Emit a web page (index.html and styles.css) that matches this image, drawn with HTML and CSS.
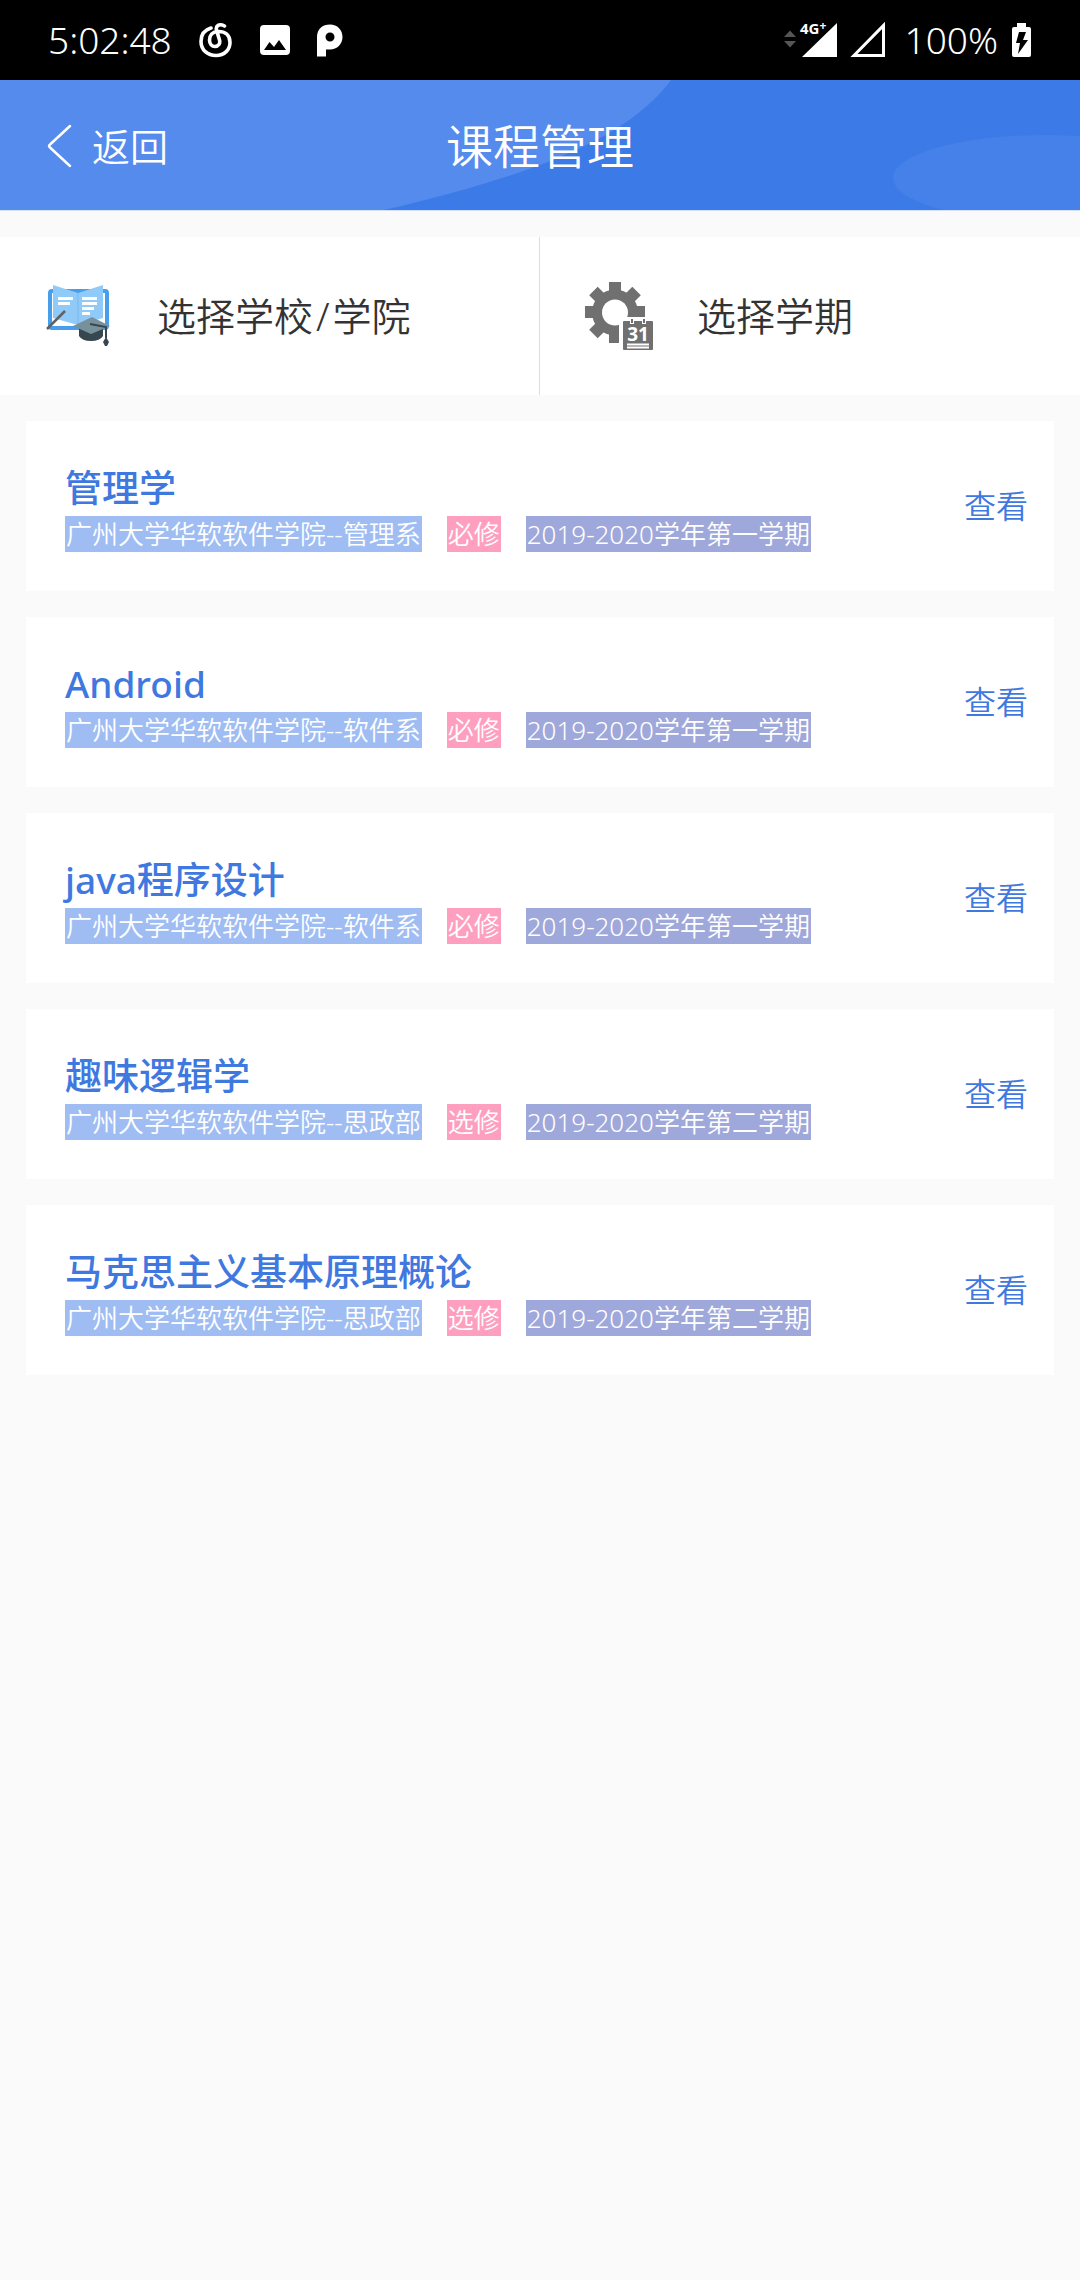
FILE: index.html
```html
<!DOCTYPE html>
<html lang="zh-CN">
<head>
<meta charset="utf-8">
<meta name="viewport" content="width=device-width, initial-scale=1">
<title>课程管理</title>
<link rel="stylesheet" href="styles.css">
</head>
<body>
<div class="status-bar">
  <div class="status-group">
    <span class="status-text">5:02:48</span>
    <svg width="34" height="36" viewBox="0 0 34 36" fill="none" stroke="#fff" stroke-width="3.6" stroke-linecap="round"><path d="M12 6C5 8 2 13 2 19.500C2 28 8.500 33.500 17 33.500C25.500 33.500 31 27.500 31 20.500C31 13 26 9.500 19.500 9.500C13 9.500 10.500 14 10.500 18C10.500 22 13 24.500 16 24.500C19.500 24.500 21.500 21.500 20.500 18L17.500 8C16.500 4 20 1 25.500 4"/></svg>
    <svg width="30" height="36" viewBox="0 0 30 36"><path fill="#fff" fill-rule="evenodd" d="M4 3H26Q30 3 30 7V29Q30 33 26 33H4Q0 33 0 29V7Q0 3 4 3ZM4 28H26L19 18L14 25L9.500 20Z"/></svg>
    <svg width="26" height="36" viewBox="0 0 26 36"><path fill="#fff" fill-rule="evenodd" d="M0 34.500V15C0 7 5.500 2.500 13 2.500C20.500 2.500 25.500 8 25.500 15C25.500 22 20 27.500 13 27.500H9V34.500ZM13 10.500A4.500 4.500 0 1 0 13 19.500A4.500 4.500 0 1 0 13 10.500Z"/></svg>
  </div>
  <div class="status-group status-group-right">
    <svg width="54" height="60" viewBox="0 -10 54 60"><path fill="#555" d="M0 17H12L6 10.500ZM0 21H12L6 27.500Z"/><path fill="#fff" d="M18 37H53V3Z"/><text class="network-label" x="16" y="14">4G<tspan class="network-plus" dy="-4">+</tspan></text></svg>
    <svg width="36" height="40" viewBox="0 0 36 40"><path fill="none" stroke="#fff" stroke-width="3" d="M4 35.500H33.500V5.500Z"/></svg>
    <span class="status-text status-percent">100%</span>
    <svg width="20" height="40" viewBox="0 0 20 40"><path fill="#fff" d="M5 3H14V7H17Q19 7 19 9V35Q19 37 17 37H2Q0 37 0 35V9Q0 7 2 7H5Z"/><path fill="#000" d="M7 12H14L11 20H16L6 34L8 23H4Z"/></svg>
  </div>
</div>

<header class="app-header">
  <svg class="header-art" viewBox="0 0 1080 130" preserveAspectRatio="none"><path fill="#548bed" d="M0 0H671C636 47 566 88 384 130H0Z"/><ellipse cx="1045" cy="98" rx="152" ry="43" fill="#4680e9"/></svg>
  <button class="back-button" type="button">
    <svg width="26" height="44" viewBox="0 0 26 44" fill="none" stroke="#fff" stroke-width="2.500" stroke-linecap="round" stroke-linejoin="round"><path d="M23 2L3 20.500Q1 22 3 23.500L23 42"/></svg>
    <span>返回</span>
  </button>
  <h1 class="header-title">课程管理</h1>
</header>

<main class="content">
  <div class="filters">
    <button class="filter" type="button">
      <svg class="filter-icon" width="70" height="70" viewBox="0 4 70 70">
        <rect x="4" y="14" width="57" height="37" rx="2" fill="#fff" stroke="#479eea" stroke-width="4"/>
        <path fill="#90caf9" d="M7 8L32 16L57 8V41L32 48L7 41Z"/>
        <path stroke="#79b9ed" d="M32 16V48"/>
        <path stroke="#fff" stroke-width="3" d="M12 21.500H27M12 26.500H24M36 21.500H51M36 26.500H51M36 31.500H48M36 36.500H44"/>
        <path stroke="#616161" stroke-width="2.500" d="M1 52L19 34"/>
        <path fill="#37474f" d="M33 47L45 53L57 47V59Q54 64 45 64Q36 64 33 59Z"/>
        <path fill="#78909c" d="M27 49L46 40L64 49L45 57Z"/>
        <path fill="none" stroke="#37474f" stroke-width="2" d="M44 47L60 50V61"/>
        <path fill="#37474f" d="M60 60L63 65L61 69H59L57 65Z"/>
      </svg>
      <span>选择学校<span class="slash">/</span>学院</span>
    </button>
    <button class="filter" type="button">
      <svg class="filter-icon" width="70" height="70" viewBox="2 4 70 70">
        <g fill="#707070"><path d="M25 5H37V66H25ZM1 29H61V41H1Z"/><path d="M25 5H37V66H25Z" transform="rotate(45 31 35.500)"/><path d="M25 5H37V66H25Z" transform="rotate(-45 31 35.500)"/><circle cx="31" cy="35.500" r="23"/></g>
        <circle cx="31" cy="35.500" r="13" fill="#fff"/>
        <path fill="#fff" d="M35 40H70V70H35Z"/>
        <rect x="39" y="44" width="30" height="29" rx="1" fill="#707070"/>
        <path stroke="#fff" stroke-width="4" d="M48 42V47M60 42V47"/>
        <path stroke="#707070" stroke-width="2" d="M48 42V46M60 42V46"/>
        <text class="calendar-day" x="54" y="64">31</text>
        <path stroke="#fff" stroke-width="2" d="M43 67.500H65M43 70.500H65"/>
      </svg>
      <span>选择学期</span>
    </button>
  </div>

  <ul class="course-list">
    <li class="course">
      <div class="course-info"><h2 class="course-name">管理学</h2>
        <div class="tags"><span class="tag tag-school">广州大学华软软件学院--管理系</span><span class="tag tag-type">必修</span><span class="tag tag-term">2019-2020学年第一学期</span></div></div>
      <a class="view-link" href="#">查看</a>
    </li>
    <li class="course">
      <div class="course-info"><h2 class="course-name">Android</h2>
        <div class="tags"><span class="tag tag-school">广州大学华软软件学院--软件系</span><span class="tag tag-type">必修</span><span class="tag tag-term">2019-2020学年第一学期</span></div></div>
      <a class="view-link" href="#">查看</a>
    </li>
    <li class="course">
      <div class="course-info"><h2 class="course-name">java程序设计</h2>
        <div class="tags"><span class="tag tag-school">广州大学华软软件学院--软件系</span><span class="tag tag-type">必修</span><span class="tag tag-term">2019-2020学年第一学期</span></div></div>
      <a class="view-link" href="#">查看</a>
    </li>
    <li class="course">
      <div class="course-info"><h2 class="course-name">趣味逻辑学</h2>
        <div class="tags"><span class="tag tag-school">广州大学华软软件学院--思政部</span><span class="tag tag-type">选修</span><span class="tag tag-term">2019-2020学年第二学期</span></div></div>
      <a class="view-link" href="#">查看</a>
    </li>
    <li class="course">
      <div class="course-info"><h2 class="course-name">马克思主义基本原理概论</h2>
        <div class="tags"><span class="tag tag-school">广州大学华软软件学院--思政部</span><span class="tag tag-type">选修</span><span class="tag tag-term">2019-2020学年第二学期</span></div></div>
      <a class="view-link" href="#">查看</a>
    </li>
  </ul>
</main>
</body>
</html>
```
FILE: styles.css
```css
* { box-sizing: border-box; }

body {
  margin: 0;
  background: #fafafa;
  color: #333;
  font-family: "Noto Sans", "Noto Sans CJK SC", sans-serif;
  font-weight: 350;
}

button {
  margin: 0;
  padding: 0;
  border: 0;
  background: none;
  color: inherit;
  font: inherit;
}

svg { display: block; flex: none; }

.status-bar {
  display: flex;
  align-items: center;
  justify-content: space-between;
  height: 80px;
  padding: 0 48px;
  background: #000;
  color: #fff;
}

.status-group { display: flex; align-items: center; gap: 27px; }
.status-group-right { gap: 12px; }
.status-text { font-size: 37px; line-height: 40px; }
.status-percent { margin: 0 2px 0 7px; }

.network-label {
  fill: #fff;
  font-size: 15px;
  font-weight: 700;
}

.network-plus { font-size: 12px; }

.app-header {
  position: relative;
  display: grid;
  grid-template-columns: 1fr auto 1fr;
  align-items: center;
  height: 131px;
  padding: 2px 47px 0;
  border-bottom: 1px solid #d5e1f6;
  background: #3c7ae7;
  color: #fff;
}

.header-art {
  position: absolute;
  inset: 0;
  width: 100%;
  height: 100%;
}

.back-button {
  position: relative;
  display: flex;
  align-items: center;
  justify-self: start;
  gap: 19px;
  font-size: 38px;
  line-height: 56px;
}

.header-title {
  position: relative;
  margin: 0;
  font-size: 47px;
  font-weight: 350;
  line-height: 64px;
}

.content { padding-top: 26px; }

.filters {
  display: grid;
  grid-template-columns: 1fr 1fr;
  background: #fff;
}

.filter {
  display: flex;
  align-items: center;
  gap: 41px;
  height: 158px;
  padding-left: 46px;
  font-size: 39px;
  line-height: 56px;
}

.filter:first-child { border-right: 1px solid #ddd; }
.filter-icon { overflow: visible; }
.slash { padding: 0 3px; }

.calendar-day {
  fill: #fff;
  font-size: 19px;
  font-weight: 700;
  text-anchor: middle;
}

.course-list {
  display: grid;
  gap: 26px;
  margin: 0;
  padding: 26px;
  list-style: none;
}

.course {
  display: flex;
  align-items: center;
  justify-content: space-between;
  min-height: 170px;
  padding: 0 26px 0 39px;
  background: #fff;
}

.course-name {
  margin: 0;
  color: #3f78df;
  font-size: 37px;
  font-weight: 500;
  line-height: 56px;
}

.tags { display: flex; gap: 25px; }

.tag {
  padding: 0 1px;
  color: #fff;
  font-size: 26px;
  line-height: 36px;
  white-space: nowrap;
}

.tag-school { background: #9fbdf3; }
.tag-type { background: #ff9fc0; }
.tag-term { background: #9fa8da; }

.view-link {
  color: #3f78df;
  font-size: 32px;
  line-height: 48px;
  text-decoration: none;
}
```
